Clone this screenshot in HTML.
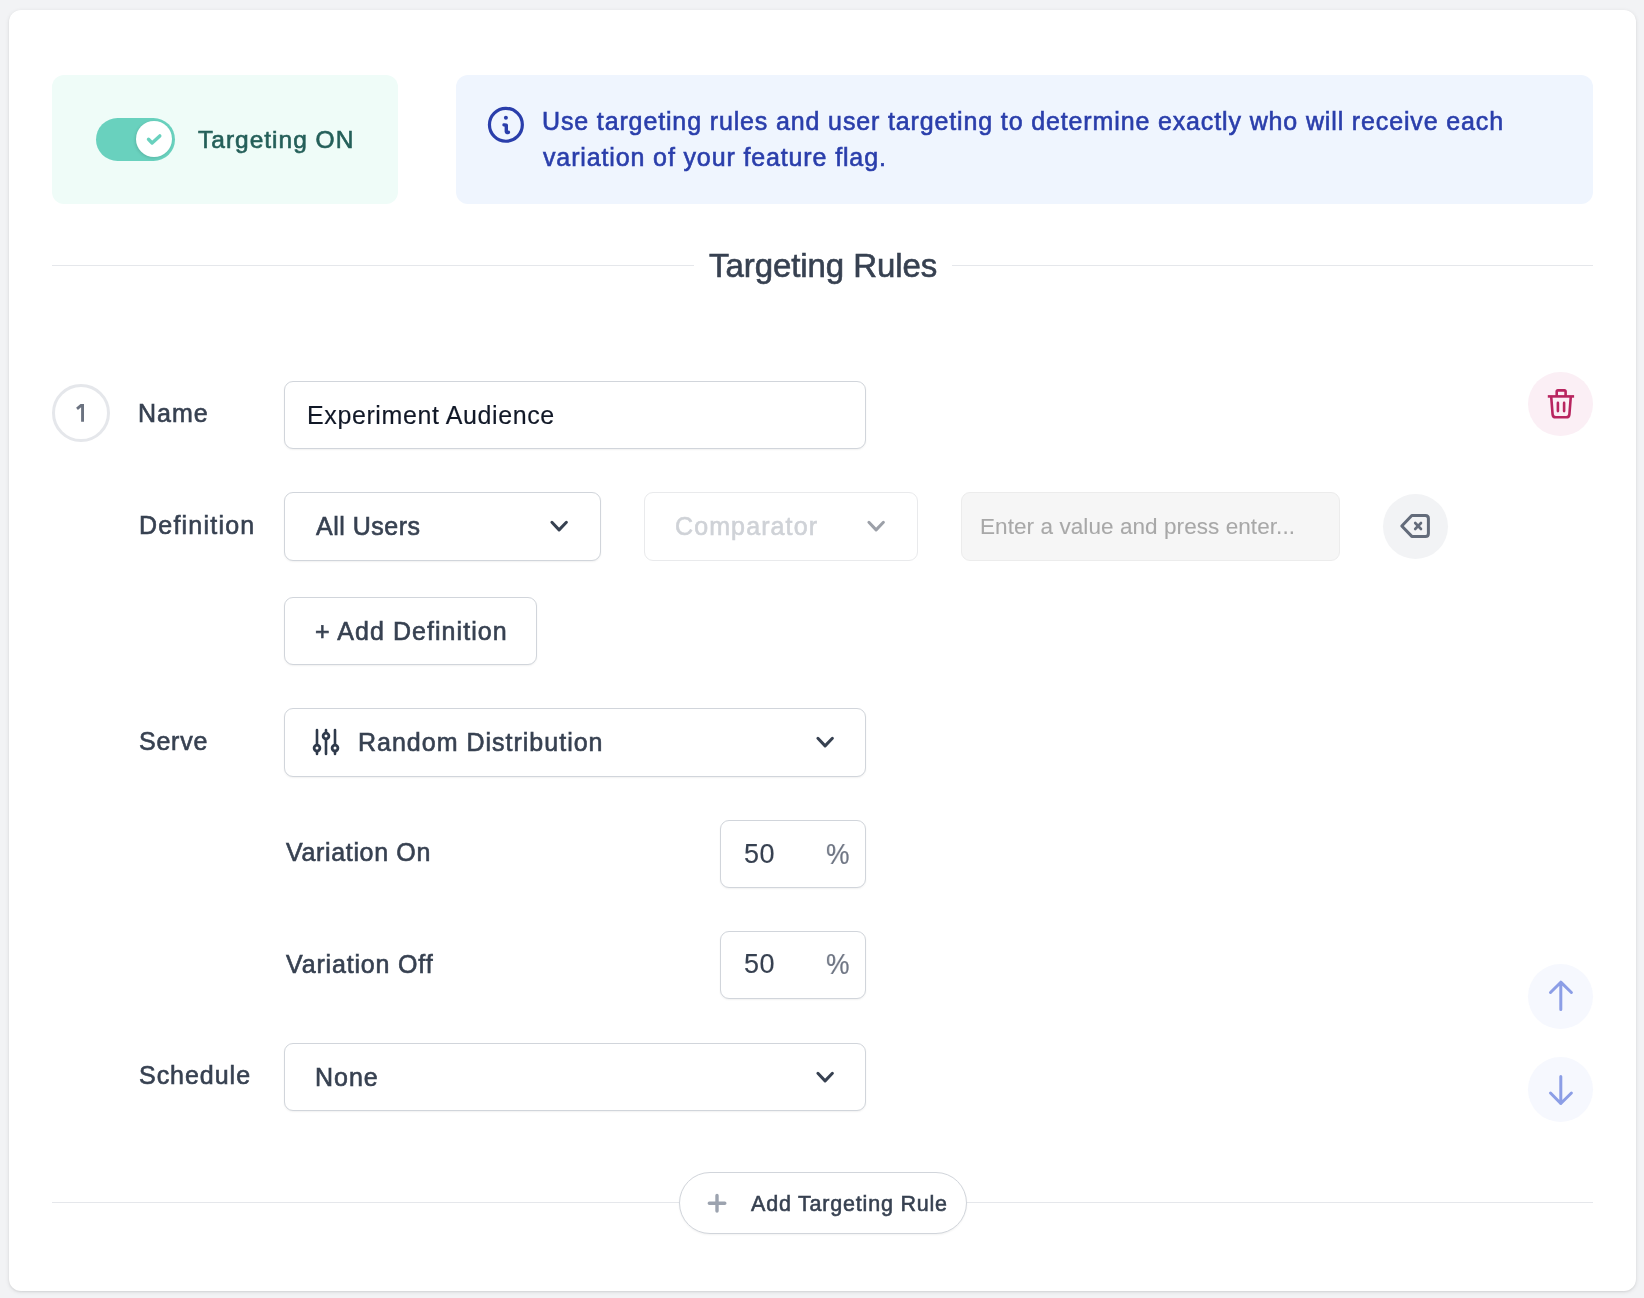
<!DOCTYPE html>
<html><head><meta charset="utf-8"><title>Targeting</title>
<style>
html,body{margin:0;padding:0;}
body{width:1644px;height:1298px;background:#f2f3f5;position:relative;overflow:hidden;font-family:"Liberation Sans",sans-serif;}
.b{position:absolute;box-sizing:border-box;}
.t{position:absolute;white-space:nowrap;font-family:"Liberation Sans",sans-serif;will-change:transform;}
</style></head><body>
<div class="b" style="left:9px;top:10px;width:1627px;height:1281px;background:#fff;border-radius:12px;box-shadow:0 1px 4px rgba(0,0,0,0.10),0 1px 2px rgba(0,0,0,0.06);"></div>
<div class="b" style="left:52px;top:75px;width:346px;height:129px;background:#effcf8;border-radius:12px;"></div>
<div class="b" style="left:96px;top:118px;width:79px;height:43px;background:#69d1be;border-radius:22px;"></div>
<div class="b" style="left:136px;top:121px;width:36px;height:36px;background:#fff;border-radius:50%;box-shadow:-1px 1px 3px rgba(0,0,0,0.12);"></div>
<svg class="b" style="left:144px;top:129px" width="20" height="20" viewBox="0 0 20 20"><path d="M4.5 10.3 L8.1 14 L15.8 6.9" fill="none" stroke="#69d1be" stroke-width="3.4" stroke-linecap="round" stroke-linejoin="round"/></svg>
<div class="t" style="left:198.0px;top:127.8px;font-size:24.5px;line-height:24.5px;letter-spacing:1.0px;color:#245f59;-webkit-text-stroke:0.6px #245f59;">Targeting ON</div>
<div class="b" style="left:456px;top:75px;width:1137px;height:129px;background:#eff5fe;border-radius:12px;"></div>
<svg class="b" style="left:486px;top:105px" width="40" height="40" viewBox="0 0 40 40"><circle cx="19.9" cy="19.8" r="16.45" fill="none" stroke="#2a3eab" stroke-width="3.2"/><circle cx="19.9" cy="12.7" r="2" fill="#2a3eab"/><path d="M18 19.9 L20.3 20.2 V26.4 Q20.5 27.8 22.4 27.3" fill="none" stroke="#2a3eab" stroke-width="3.4" stroke-linecap="round" stroke-linejoin="round"/></svg>
<div class="t" style="left:542.2px;top:108.8px;font-size:25px;line-height:25px;letter-spacing:0.862px;color:#2a3eab;-webkit-text-stroke:0.6px #2a3eab;">Use targeting rules and user targeting to determine exactly who will receive each</div>
<div class="t" style="left:542.9px;top:145.2px;font-size:25px;line-height:25px;letter-spacing:0.867px;color:#2a3eab;-webkit-text-stroke:0.6px #2a3eab;">variation of your feature flag.</div>
<div class="b" style="left:52px;top:265px;width:642px;height:1px;background:#e5e7eb;"></div>
<div class="b" style="left:952px;top:265px;width:641px;height:1px;background:#e5e7eb;"></div>
<div class="t" style="left:708.6px;top:248.7px;font-size:33px;line-height:33px;letter-spacing:-0.071px;color:#374151;-webkit-text-stroke:0.6px #374151;">Targeting Rules</div>
<div class="b" style="left:52px;top:384px;width:58px;height:58px;border:3px solid #e5e7eb;border-radius:50%;"></div>
<svg class="b" style="left:70px;top:400px" width="22" height="26" viewBox="70 400 22 26"><path d="M80.5 404 H84 V421.8 H81.1 V407.2 L77.9 409.9 L76.1 407.7 Z" fill="#6b7280"/></svg>
<div class="t" style="left:138.4px;top:400.8px;font-size:25px;line-height:25px;letter-spacing:1.0px;color:#374151;-webkit-text-stroke:0.6px #374151;">Name</div>
<div class="b" style="left:284px;top:381px;width:582px;height:68px;border:1.5px solid #d1d5db;border-radius:9px;background:#fff;box-shadow:0 1px 2px rgba(0,0,0,0.06);"></div>
<div class="t" style="left:307.2px;top:402.8px;font-size:25px;line-height:25px;letter-spacing:0.611px;color:#111827;-webkit-text-stroke:0.15px #111827;">Experiment Audience</div>
<div class="b" style="left:1528.3px;top:372px;width:64.6px;height:64px;background:#fbeff5;border-radius:50%;"></div>
<svg class="b" style="left:1540px;top:384px" width="42" height="42" viewBox="0 0 42 42"><g fill="none" stroke="#b8255f" stroke-width="2.6" stroke-linejoin="round"><path d="M7.8 12.4 H34.1"/><path d="M16.7 12.4 V7.6 Q16.7 6.4 17.9 6.4 H24.4 Q25.6 6.4 25.6 7.6 V12.4"/><path d="M11.2 12.6 L12.6 30.3 Q12.8 33.3 15.8 33.3 H26.2 Q29.2 33.3 29.4 30.3 L30.8 12.6"/><path d="M17.9 18.9 V27.1 M24.1 18.9 V27.1" stroke-linecap="round"/></g></svg>
<div class="t" style="left:138.7px;top:512.8px;font-size:25px;line-height:25px;letter-spacing:1.222px;color:#374151;-webkit-text-stroke:0.6px #374151;">Definition</div>
<div class="b" style="left:284px;top:492px;width:317px;height:69px;border:1.5px solid #d1d5db;border-radius:9px;background:#fff;box-shadow:0 1px 2px rgba(0,0,0,0.06);"></div>
<div class="t" style="left:315.6px;top:513.8px;font-size:25px;line-height:25px;letter-spacing:0.5px;color:#374151;-webkit-text-stroke:0.6px #374151;">All Users</div>
<svg class="b" style="left:547px;top:518px" width="24" height="16" viewBox="0 0 24 16"><path d="M4.9 4.3 L12.1 11.9 L19.4 4.3" fill="none" stroke="#374151" stroke-width="3" stroke-linecap="round" stroke-linejoin="round"/></svg>
<div class="b" style="left:644px;top:492px;width:274px;height:69px;border:1.5px solid #e9eaec;border-radius:9px;background:#fff;"></div>
<div class="t" style="left:674.8px;top:514.0px;font-size:25px;line-height:25px;letter-spacing:1.111px;color:#cfd2d7;-webkit-text-stroke:0.6px #cfd2d7;">Comparator</div>
<svg class="b" style="left:864px;top:518px" width="24" height="16" viewBox="0 0 24 16"><path d="M4.9 4.3 L12.1 11.9 L19.4 4.3" fill="none" stroke="#9ca0a8" stroke-width="3" stroke-linecap="round" stroke-linejoin="round"/></svg>
<div class="b" style="left:961px;top:492px;width:379px;height:69px;border:1.5px solid #ececec;border-radius:9px;background:#f6f6f6;"></div>
<div class="t" style="left:980.3px;top:516.2px;font-size:22.5px;line-height:22.5px;letter-spacing:0.075px;color:#a8a8a8;-webkit-text-stroke:0.1px #a8a8a8;">Enter a value and press enter...</div>
<div class="b" style="left:1383px;top:494px;width:65px;height:65px;background:#f2f3f5;border-radius:50%;"></div>
<svg class="b" style="left:1383px;top:494px" width="65" height="65" viewBox="1383 494 65 65"><g fill="none" stroke="#636b7a" stroke-width="3" stroke-linejoin="round" stroke-linecap="round"><path d="M1411.8 515.5 H1425.4 Q1428.4 515.5 1428.4 518.5 V533.4 Q1428.4 536.4 1425.4 536.4 H1411.8 L1401.8 526 Z"/><path d="M1415.2 523 L1421 529 M1421 523 L1415.2 529" stroke-width="2.6"/></g></svg>
<div class="b" style="left:284px;top:597px;width:253px;height:68px;border:1.5px solid #d1d5db;border-radius:9px;background:#fff;box-shadow:0 1px 2px rgba(0,0,0,0.06);"></div>
<div class="t" style="left:315.0px;top:618.8px;font-size:25px;line-height:25px;letter-spacing:1.053px;color:#374151;-webkit-text-stroke:0.6px #374151;">+ Add Definition</div>
<div class="t" style="left:138.5px;top:728.8px;font-size:25px;line-height:25px;letter-spacing:0.75px;color:#374151;-webkit-text-stroke:0.6px #374151;">Serve</div>
<div class="b" style="left:284px;top:708px;width:582px;height:69px;border:1.5px solid #d1d5db;border-radius:9px;background:#fff;box-shadow:0 1px 2px rgba(0,0,0,0.06);"></div>
<svg class="b" style="left:305px;top:720px" width="45" height="45" viewBox="305 720 45 45"><g fill="none" stroke="#2f3a4b" stroke-width="2.6" stroke-linecap="round"><path d="M317 730 V744.8 M317 751.4 V754"/><circle cx="317" cy="748.1" r="2.9" stroke-width="2.8"/><path d="M326 730 V732.7 M326 739.3 V754"/><circle cx="326" cy="736" r="2.9" stroke-width="2.8"/><path d="M335 730 V744.8 M335 751.4 V754"/><circle cx="335" cy="748.1" r="2.9" stroke-width="2.8"/></g></svg>
<div class="t" style="left:357.5px;top:729.8px;font-size:25px;line-height:25px;letter-spacing:1.0px;color:#374151;-webkit-text-stroke:0.6px #374151;">Random Distribution</div>
<svg class="b" style="left:813px;top:734px" width="24" height="16" viewBox="0 0 24 16"><path d="M4.9 4.3 L12.1 11.9 L19.4 4.3" fill="none" stroke="#374151" stroke-width="3" stroke-linecap="round" stroke-linejoin="round"/></svg>
<div class="t" style="left:285.5px;top:839.8px;font-size:25px;line-height:25px;letter-spacing:0.655px;color:#374151;-webkit-text-stroke:0.6px #374151;">Variation On</div>
<div class="b" style="left:720px;top:820px;width:146px;height:68px;border:1.5px solid #d1d5db;border-radius:9px;background:#fff;box-shadow:0 1px 2px rgba(0,0,0,0.06);"></div>
<div class="t" style="left:743.6px;top:840.5px;font-size:27px;line-height:27px;letter-spacing:0.4px;color:#374151;-webkit-text-stroke:0.15px #374151;">50</div>
<div class="t" style="left:825.8px;top:838.5px;font-size:30px;line-height:30px;letter-spacing:0px;color:#6b7280;-webkit-text-stroke:0.15px #6b7280;transform:scaleX(0.88);transform-origin:0 0;">%</div>
<div class="t" style="left:285.5px;top:951.8px;font-size:25px;line-height:25px;letter-spacing:0.833px;color:#374151;-webkit-text-stroke:0.6px #374151;">Variation Off</div>
<div class="b" style="left:720px;top:931px;width:146px;height:68px;border:1.5px solid #d1d5db;border-radius:9px;background:#fff;box-shadow:0 1px 2px rgba(0,0,0,0.06);"></div>
<div class="t" style="left:743.6px;top:951.1px;font-size:27px;line-height:27px;letter-spacing:0.4px;color:#374151;-webkit-text-stroke:0.15px #374151;">50</div>
<div class="t" style="left:825.8px;top:949.1px;font-size:30px;line-height:30px;letter-spacing:0px;color:#6b7280;-webkit-text-stroke:0.15px #6b7280;transform:scaleX(0.88);transform-origin:0 0;">%</div>
<div class="t" style="left:138.7px;top:1062.8px;font-size:25px;line-height:25px;letter-spacing:0.971px;color:#374151;-webkit-text-stroke:0.6px #374151;">Schedule</div>
<div class="b" style="left:284px;top:1043px;width:582px;height:68px;border:1.5px solid #d1d5db;border-radius:9px;background:#fff;box-shadow:0 1px 2px rgba(0,0,0,0.06);"></div>
<div class="t" style="left:314.6px;top:1065.0px;font-size:25px;line-height:25px;letter-spacing:1.0px;color:#374151;-webkit-text-stroke:0.6px #374151;">None</div>
<svg class="b" style="left:813px;top:1069px" width="24" height="16" viewBox="0 0 24 16"><path d="M4.9 4.3 L12.1 11.9 L19.4 4.3" fill="none" stroke="#374151" stroke-width="3" stroke-linecap="round" stroke-linejoin="round"/></svg>
<div class="b" style="left:1528px;top:964px;width:65px;height:65px;background:#f6f8fe;border-radius:50%;"></div>
<svg class="b" style="left:1528px;top:964px" width="65" height="65" viewBox="1528 964 65 65"><g fill="none" stroke="#8c9ee6" stroke-width="3" stroke-linecap="round" stroke-linejoin="round"><path d="M1560.8 982.5 V1009.5 M1550.5 992.5 L1560.8 982.2 L1571.4 992.5"/></g></svg>
<div class="b" style="left:1528px;top:1057px;width:65px;height:65px;background:#f6f8fe;border-radius:50%;"></div>
<svg class="b" style="left:1528px;top:1057px" width="65" height="65" viewBox="1528 1057 65 65"><g fill="none" stroke="#8c9ee6" stroke-width="3" stroke-linecap="round" stroke-linejoin="round"><path d="M1560.8 1076.5 V1103.5 M1550.5 1093 L1560.8 1103.5 L1571.4 1093"/></g></svg>
<div class="b" style="left:52px;top:1202px;width:1541px;height:1px;background:#e5e7eb;"></div>
<div class="b" style="left:679px;top:1172px;width:288px;height:62px;border:1.5px solid #d1d5db;border-radius:31px;background:#fff;box-shadow:0 1px 2px rgba(0,0,0,0.05);"></div>
<svg class="b" style="left:700px;top:1186px" width="34" height="34" viewBox="0 0 34 34"><path d="M17 9.5 V25 M9.3 17.3 H24.8" fill="none" stroke="#9ca3af" stroke-width="3.4" stroke-linecap="round"/></svg>
<div class="t" style="left:750.5px;top:1193.6px;font-size:21.5px;line-height:21.5px;letter-spacing:0.8px;color:#374151;-webkit-text-stroke:0.55px #374151;">Add Targeting Rule</div>
</body></html>
